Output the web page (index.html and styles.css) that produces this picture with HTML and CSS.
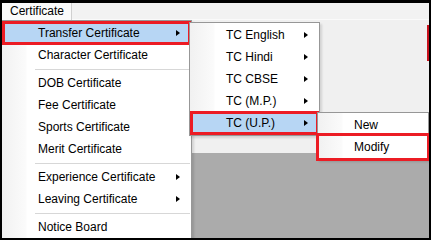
FILE: index.html
```html
<!DOCTYPE html>
<html lang="en">
<head>
	<meta charset="UTF-8">
	<title>Certificate menu</title>
	<link rel="stylesheet" href="styles.css">
</head>
<body>
	<div class="screen">
		<div class="menubar">
			<div class="bar-item">Certificate</div>
			<div class="bar-rest"></div>
		</div>
		<div class="work">
			<div class="form">
				<div class="form-gap"></div>
				<div class="panel"></div>
			</div>
			<div class="mdi"></div>
		</div>

		<ul class="menu menu-main">
			<li class="item hot mark">Transfer Certificate<span class="arrow"></span></li>
			<li class="item">Character Certificate</li>
			<li class="sep"></li>
			<li class="item">DOB Certificate</li>
			<li class="item">Fee Certificate</li>
			<li class="item">Sports Certificate</li>
			<li class="item">Merit Certificate</li>
			<li class="sep"></li>
			<li class="item">Experience Certificate<span class="arrow"></span></li>
			<li class="item">Leaving Certificate<span class="arrow"></span></li>
			<li class="sep"></li>
			<li class="item">Notice Board</li>
		</ul>

		<ul class="menu menu-tc">
			<li class="item">TC English<span class="arrow"></span></li>
			<li class="item">TC Hindi<span class="arrow"></span></li>
			<li class="item">TC CBSE<span class="arrow"></span></li>
			<li class="item">TC (M.P.)<span class="arrow"></span></li>
			<li class="item hot mark">TC (U.P.)<span class="arrow"></span></li>
		</ul>

		<ul class="menu menu-up">
			<li class="item">New</li>
			<li class="item mark mark-out">Modify</li>
		</ul>
	</div>
</body>
</html>
```

FILE: styles.css
```css
*{
	margin: 0;
	padding: 0;
}
li{
	list-style: none;
}
body{
	background: #000;
	font-family: "Liberation Sans", Arial, sans-serif;
	font-size: 12px;
	color: #000;
}
.screen{
	position: relative;
	width: 427px;
	height: 235px;
	margin: 3px 2px 0 2px;
	background: #f0f0f0;
	overflow: hidden;
}

/* top menu bar */
.menubar{
	display: flex;
	height: 17px;
}
.bar-item{
	width: 70px;
	padding-left: 8px;
	line-height: 17px;
	background: #fafafa;
	border-right: 1px solid #d0d0d0;
	box-sizing: border-box;
}
.bar-rest{
	flex: 1;
	background: #f2f2f2;
	border-bottom: 1px solid #fafafa;
}

/* window behind the menus */
.work{
	display: flex;
	flex-direction: column;
	height: 218px;
}
.form{
	display: flex;
	height: 133px;
	background: #f0f0f0;
}
.form-gap{
	width: 314px;
}
.panel{
	flex: 1;
	height: 36px;
	margin-top: 5px;
	border-left: 2px solid #c8101c;
	border-right: 2px solid #c8101c;
}
.mdi{
	flex: 1;
	margin-left: 188px;
	background: #ababab;
	border-left: 2px solid #8f8f8f;
}

/* popup menus */
.menu{
	position: absolute;
	background: linear-gradient(to right, #f1f1f1 0, #fbfbfb 24px, #fff 25px);
	border: 1px solid #979797;
	padding: 1px 1px;
	box-shadow: 2px 2px 2px rgba(0,0,0,0.12);
}
.menu-main{
	left: -1px;
	top: 17px;
	width: 187px;
}
.menu-tc{
	left: 187px;
	top: 19px;
	width: 127px;
}
.menu-up{
	left: 315px;
	top: 109px;
	width: 108px;
}
.item{
	position: relative;
	height: 22px;
	line-height: 22px;
	padding-left: 35px;
	white-space: nowrap;
}
.hot{
	background: #b7d6f4;
}
.mark{
	outline: 3px solid #ec1c24;
	outline-offset: -2px;
}
.mark-out{
	outline-offset: 0;
}
.arrow{
	position: absolute;
	right: 10px;
	top: 8px;
	width: 0;
	height: 0;
	border-left: 4px solid #000;
	border-top: 3.5px solid transparent;
	border-bottom: 3.5px solid transparent;
}
.sep{
	height: 6px;
	margin-left: 32px;
	background: linear-gradient(#d7d7d7, #d7d7d7) no-repeat 0 3px / 100% 1px;
}
```
